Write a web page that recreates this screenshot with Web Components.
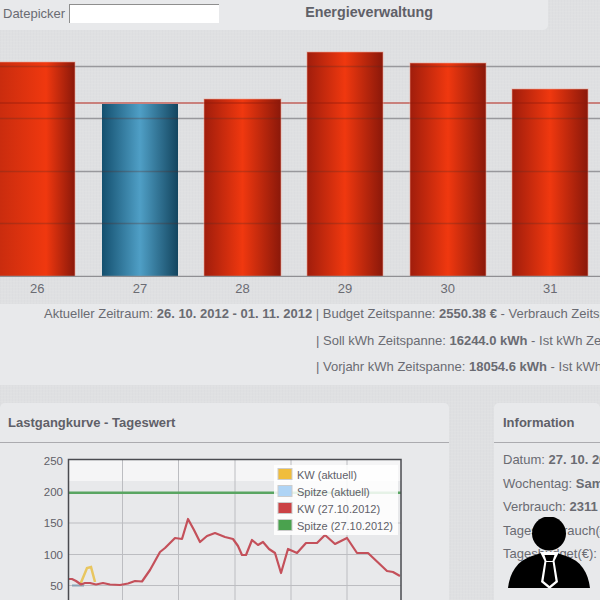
<!DOCTYPE html>
<html><head><meta charset="utf-8">
<style>
html,body{margin:0;padding:0;height:600px;overflow:hidden}
body{width:600px;background-color:#dfe0e2;background-image:repeating-linear-gradient(0deg,rgba(255,255,255,.05) 0 1px,transparent 1px 3px),repeating-linear-gradient(90deg,rgba(150,150,160,.03) 0 1px,transparent 1px 3px);font-family:"Liberation Sans",Arial,sans-serif;color:#63646c;font-size:13px;display:flex;flex-direction:column}
</style></head><body>
<template id="t-top"><style>
:host{display:flex;height:30px;width:548px;box-sizing:border-box;background:#e8e9eb;border-bottom-right-radius:5px;padding:4px 0 0 3px;align-items:flex-start}
label{font-size:13px;line-height:20px;color:#6a6b72;margin-right:4px}
input{width:150px;height:19px;box-sizing:border-box;border:0;border-top:1px solid #8e8e8e;border-left:1px solid #8e8e8e;background:#fff;padding:0;margin:0}
h1{margin:0 0 0 86px;font-size:14.300px;line-height:16px;font-weight:700;color:#5f6068;white-space:nowrap}
</style><label>Datepicker</label><input aria-label="Datepicker"><h1><slot></slot></h1></template>

<template id="t-bars"><style>
:host{display:block;height:274px;flex:none}
svg{display:block}
.labels{display:grid;grid-template-columns:repeat(6,102.6px);margin-left:-14px;height:27px;line-height:24px;text-align:center;font-size:13px;color:#6a6b72}
</style>
<svg width="600" height="247" viewBox="0 30 600 247">
<defs>
<linearGradient id="r"><stop offset="0" stop-color="#a01d0c"/><stop offset=".5" stop-color="#f0380f"/><stop offset="1" stop-color="#8a180a"/></linearGradient>
<linearGradient id="rf"><stop offset="0" stop-color="#c92c0e"/><stop offset=".62" stop-color="#f0380f"/><stop offset="1" stop-color="#8a180a"/></linearGradient>
<linearGradient id="b"><stop offset="0" stop-color="#14506f"/><stop offset=".5" stop-color="#4f9fc6"/><stop offset="1" stop-color="#13455f"/></linearGradient>
</defs>
<g stroke="#98989c" stroke-width="1.400"><path d="M0 66.500H600M0 118.500H600M0 171.500H600M0 223.500H600"/></g>
<path d="M0 103H600" stroke="#c2605a" stroke-width="1.400"/>
<g stroke="#f0a090" stroke-opacity=".6" stroke-width="1">
<rect x="-1" y="62" width="76" height="215" fill="url(#rf)"/>
<rect x="204" y="99" width="77" height="178" fill="url(#r)"/>
<rect x="307" y="52" width="76" height="225" fill="url(#r)"/>
<rect x="410" y="63" width="76" height="214" fill="url(#r)"/>
<rect x="512" y="89" width="76" height="188" fill="url(#r)"/>
</g>
<rect x="102" y="104" width="76" height="173" fill="url(#b)"/>
<g stroke="#5b2a24" stroke-opacity=".3" stroke-width="1.400"><path d="M0 66.500H75M307 66.500H383M410 66.500H486M0 118.500H75M102 118.500H178M204 118.500H281M307 118.500H383M410 118.500H486M512 118.500H588M0 171.500H75M102 171.500H178M204 171.500H281M307 171.500H383M410 171.500H486M512 171.500H588M0 223.500H75M102 223.500H178M204 223.500H281M307 223.500H383M410 223.500H486M512 223.500H588"/></g>
<path d="M0 103H75M204 103H281M307 103H383M410 103H486M512 103H588" stroke="#8e1a0c" stroke-opacity=".7" stroke-width="1"/>
<path d="M0 276.500H600" stroke="#8f8f93" stroke-width="1.500"/>
</svg>
<div class="labels"><span>26</span><span>27</span><span>28</span><span>29</span><span>30</span><span>31</span></div>
</template>

<template id="t-summary"><style>
:host{display:flex;flex-direction:column;gap:6.500px;height:81px;flex:none;background:#e8e9eb;white-space:nowrap;overflow:hidden;color:#6a6b72;font-size:13px;line-height:20px}
</style><slot></slot></template>

<template id="t-line"><style>
:host{display:block;padding-left:var(--indent,0)}
</style><slot></slot></template>

<template id="t-panel"><style>
:host{display:block;background:#e8e9eb;border-radius:5px 5px 0 0;height:197px;overflow:hidden;box-sizing:border-box;flex:none}
header{height:40px;box-sizing:border-box;border-bottom:1.500px solid #ababaf;font-weight:700;font-size:13px;line-height:40px;color:#5f6068;padding-left:var(--pad,8px);white-space:nowrap}
</style><header><slot name="title"></slot></header><slot></slot></template>

<template id="t-load"><style>
:host{display:block}
svg{display:block;font-family:"Liberation Sans",Arial,sans-serif}
</style>
<svg width="449" height="157" viewBox="0 443 449 157">
<rect x="69" y="460" width="332" height="21" fill="#f5f5f6"/>
<g stroke="#bcbdc1" stroke-width="1"><path d="M68 523H401M68 554.500H401M68 585.500H401M122.500 459V600M178.500 459V600M235 459V600M291 459V600M347 459V600"/></g>
<path d="M68 492.700H401" stroke="#59a562" stroke-width="2.500"/>
<g font-size="11.500" fill="#5f6068" text-anchor="end"><text x="63" y="465">250</text><text x="63" y="496">200</text><text x="63" y="527">150</text><text x="63" y="559">100</text><text x="63" y="590">50</text></g>
<path d="M72 585.500H84" stroke="#8aa3b5" stroke-width="2" fill="none"/>
<path d="M80 585L87 568L91 567L95 582" stroke="#e8c660" stroke-width="2.500" fill="none"/>
<path d="M68 579L72 579L76 581L81 584.500L85 583L90 583L96 584.500L103 583L110 584.500L120 585L128 583.500L135 581L142 581.500L150 570L155 561L160 552L165 548L175 538L182 539L188 519L194 530L200 542L207 536L215 533L225 537L233 539L238 546L242 555L246 555L252 540L258 545L263 542L269 549L275 553L281 573L288 549L297 553L306 543L317 543L325 535L335 544L347 538L357 553L368 553L387 571L393 572L400 576" stroke="#c4505a" stroke-width="2.200" fill="none" stroke-linejoin="round"/>
<rect x="68.500" y="459.500" width="332.500" height="150" fill="none" stroke="#4a4b50" stroke-width="1.500"/>
<rect x="274" y="465" width="124" height="70" fill="#fff" fill-opacity=".85"/>
<g font-size="11" fill="#5f6068"><text x="297" y="479">KW (aktuell)</text><text x="297" y="496">Spitze (aktuell)</text><text x="297" y="513">KW (27.10.2012)</text><text x="297" y="530">Spitze (27.10.2012)</text></g>
<g stroke="#ccc" stroke-width="1"><rect x="278" y="468.500" width="14" height="11" fill="#f0bd3c"/><rect x="278" y="485.500" width="14" height="11" fill="#afd4f5"/><rect x="278" y="502.500" width="14" height="11" fill="#cb4245"/><rect x="278" y="519.500" width="14" height="11" fill="#4aa24e"/></g>
</svg></template>

<template id="t-info"><style>
:host{display:block;padding:5px 0 0 9px;color:#6a6b72;font-size:13px;line-height:23.500px;white-space:nowrap}
::slotted(*){display:block}
</style><slot></slot></template>

<template id="t-person"><style>
:host{display:block;position:absolute;left:508px;top:517px;width:82px;height:73px}
svg{display:block}
</style>
<svg width="82" height="73" viewBox="508 517 82 73">
<path d="M508 588C510 572 517 561 532 556L541 553H557L566 556C581 561 588 572 590 588Z" fill="#000"/>
<path d="M540 552L544.500 561L541 582L549.500 589L558 582L554.500 561L559 552Z" fill="#fff"/>
<path d="M544.500 555H554.500L552.500 561L555.500 581L549.500 586L543.500 581L546.500 561Z" fill="#000"/>
<path d="M545 561.500H554" stroke="#fff" stroke-width="1"/>
<circle cx="549" cy="533.500" r="17" fill="#000"/>
</svg></template>

<top-bar>Energieverwaltung</top-bar>
<bar-chart></bar-chart>
<summary-panel>
<info-line style="--indent:44px">Aktueller Zeitraum: <b>26. 10. 2012 - 01. 11. 2012</b> | Budget Zeitspanne: <b>2550.38 €</b> - Verbrauch Zeitspanne: <b>2311 €</b></info-line>
<info-line style="--indent:316px">| Soll kWh Zeitspanne: <b>16244.0 kWh</b> - Ist kWh Zeitspanne: <b>14720 kWh</b></info-line>
<info-line style="--indent:316px">| Vorjahr kWh Zeitspanne: <b>18054.6 kWh</b> - Ist kWh Zeitspanne: <b>14720 kWh</b></info-line>
</summary-panel>
<lower-row>
<data-panel style="width:449px"><span slot="title">Lastgangkurve - Tageswert</span><load-chart></load-chart></data-panel>
<data-panel style="width:106px;--pad:9px"><span slot="title">Information</span>
<info-list>
<span>Datum: <b>27. 10. 2012</b></span>
<span>Wochentag: <b>Samstag</b></span>
<span>Verbrauch: <b>2311 kWh</b></span>
<span>Tagesverbrauch(€): <b>321.5</b></span>
<span>Tagesbudget(€): <b>364</b></span>
</info-list></data-panel>
</lower-row>
<person-badge></person-badge>

<script>
function def(name,tpl){customElements.define(name,class extends HTMLElement{constructor(){super();this.attachShadow({mode:"open"}).appendChild(document.getElementById(tpl).content.cloneNode(true));}});}
def("top-bar","t-top");def("bar-chart","t-bars");def("summary-panel","t-summary");def("info-line","t-line");
def("data-panel","t-panel");def("load-chart","t-load");def("info-list","t-info");def("person-badge","t-person");
customElements.define("lower-row",class extends HTMLElement{constructor(){super();const s=this.attachShadow({mode:"open"});s.innerHTML='<style>:host{display:flex;gap:45px;margin-top:18px;width:600px;flex:none}</style><slot></slot>';}});
</script>
</body></html>
